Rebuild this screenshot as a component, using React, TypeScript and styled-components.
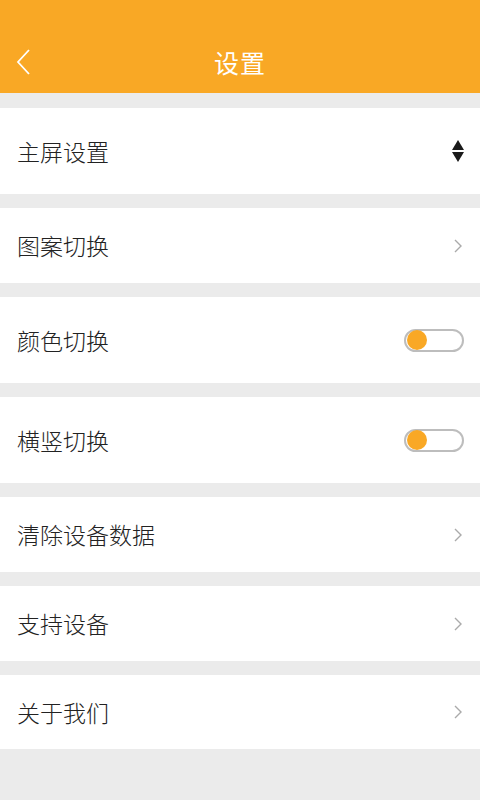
import React, { useState } from 'react';
import styled, { createGlobalStyle } from 'styled-components';

const GlobalStyle = createGlobalStyle`
  html, body {
    margin: 0;
    padding: 0;
    background: #ebebeb;
  }
  body {
    font-family: "Noto Sans CJK SC", "Noto Sans", sans-serif;
  }
`;

const Page = styled.div`
  width: 480px;
  min-height: 800px;
  background: #ebebeb;
  display: flex;
  flex-direction: column;
`;

const Header = styled.header`
  height: 93px;
  background: #f9a825;
  display: flex;
  align-items: center;
  justify-content: center;
  position: relative;
  flex-shrink: 0;
`;

const BackButton = styled.button`
  position: absolute;
  left: 12px;
  top: 46px;
  width: 22px;
  height: 32px;
  padding: 0;
  border: none;
  background: transparent;
  display: flex;
  align-items: center;
  justify-content: center;
`;

const Title = styled.h1`
  margin: 0;
  margin-top: 30px;
  color: #ffffff;
  font-size: 25px;
  font-weight: 400;
  letter-spacing: 1px;
`;

const List = styled.div`
  display: flex;
  flex-direction: column;
  gap: 14px;
  padding-top: 15px;
`;

const Row = styled.div<{ $height: number }>`
  height: ${({ $height }) => $height}px;
  background: #ffffff;
  display: flex;
  align-items: center;
  justify-content: space-between;
  padding: 0 16px 0 17px;
`;

const Label = styled.span`
  font-size: 23px;
  font-weight: 300;
  color: #222222;
  line-height: 1;
`;

const Track = styled.button<{ $on: boolean }>`
  width: 60px;
  height: 23px;
  border-radius: 12px;
  border: 2px solid #bdbdbd;
  background: #ffffff;
  padding: 0;
  display: flex;
  align-items: center;
  justify-content: ${({ $on }) => ($on ? 'flex-end' : 'flex-start')};
  cursor: pointer;
`;

const Knob = styled.span`
  width: 20px;
  height: 20px;
  border-radius: 50%;
  background: #f9a825;
  margin: 0 1px;
`;

const Chevron = () => (
  <svg width="10" height="16" viewBox="0 0 10 16" style={{ marginRight: 1 }}>
    <path d="M2 2 L8 8 L2 14" fill="none" stroke="#aaaaaa" strokeWidth="1.4" />
  </svg>
);

const SortIcon = () => (
  <svg width="12" height="24" viewBox="0 0 12 24">
    <path d="M6 1 L12 11 L0 11 Z" fill="#1a1a1a" />
    <path d="M0 13 L12 13 L6 23 Z" fill="#1a1a1a" />
  </svg>
);

const Toggle = ({ initial }: { initial: boolean }) => {
  const [on, setOn] = useState(initial);
  return (
    <Track $on={on} onClick={() => setOn(!on)}>
      <Knob />
    </Track>
  );
};

type Item = {
  label: string;
  height: number;
  kind: 'sort' | 'chevron' | 'toggle';
};

const items: Item[] = [
  { label: '主屏设置', height: 86, kind: 'sort' },
  { label: '图案切换', height: 75, kind: 'chevron' },
  { label: '颜色切换', height: 86, kind: 'toggle' },
  { label: '横竖切换', height: 86, kind: 'toggle' },
  { label: '清除设备数据', height: 75, kind: 'chevron' },
  { label: '支持设备', height: 75, kind: 'chevron' },
  { label: '关于我们', height: 74, kind: 'chevron' },
];

export default function App() {
  return (
    <>
      <GlobalStyle />
      <Page>
        <Header>
          <BackButton aria-label="返回">
            <svg width="16" height="26" viewBox="0 0 16 26">
              <path d="M14 1 L3 13 L14 25" fill="none" stroke="#ffffff" strokeWidth="1.8" />
            </svg>
          </BackButton>
          <Title>设置</Title>
        </Header>
        <List>
          {items.map((item) => (
            <Row key={item.label} $height={item.height}>
              <Label>{item.label}</Label>
              {item.kind === 'sort' && <SortIcon />}
              {item.kind === 'chevron' && <Chevron />}
              {item.kind === 'toggle' && <Toggle initial={false} />}
            </Row>
          ))}
        </List>
      </Page>
    </>
  );
}
